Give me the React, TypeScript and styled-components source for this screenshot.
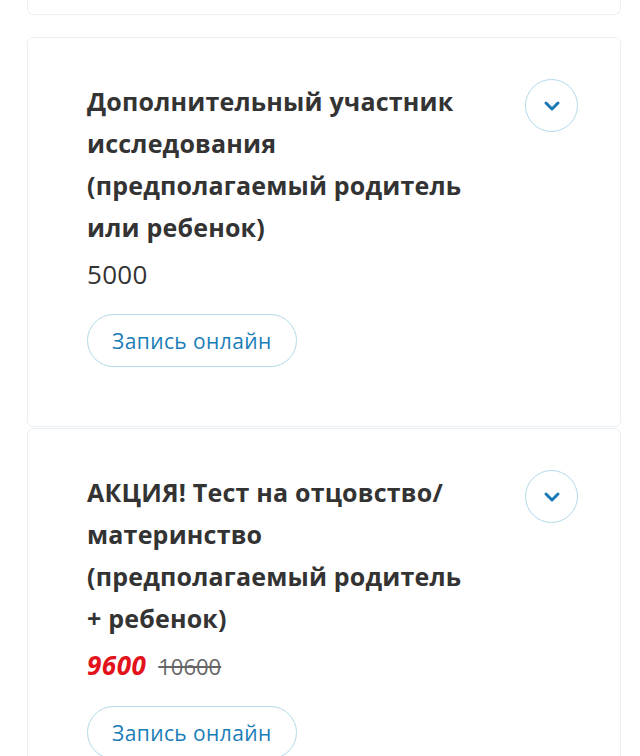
import styled, { createGlobalStyle } from "styled-components";

const GlobalStyle = createGlobalStyle`
  html, body {
    margin: 0;
    padding: 0;
    background: #ffffff;
  }
  body {
    font-family: "Open Sans", "Noto Sans", sans-serif;
    color: #333333;
  }
`;

type Service = {
  title: React.ReactNode;
  price: number;
  oldPrice?: number;
};

const services: Service[] = [
  {
    title: "Дополнительный участник исследования (предполагаемый родитель или ребенок)",
    price: 5000,
  },
  {
    title: (
      <>
        АКЦИЯ! Тест на отцовство/<wbr />материнство (предполагаемый родитель + ребенок)
      </>
    ),
    price: 9600,
    oldPrice: 10600,
  },
];

const ChevronDown = () => (
  <svg width="18" height="12" viewBox="0 0 18 12" fill="none">
    <path d="M3 3l6 6 6-6" stroke="#1a78b4" strokeWidth="3" strokeLinecap="round" strokeLinejoin="round" />
  </svg>
);

const App = () => {
  return (
    <>
      <GlobalStyle />
      <List>
        <PrevCard />
        {services.map((s, i) => (
          <Card key={i}>
            <Head>
              <Title>{s.title}</Title>
              <Toggle aria-label="Подробнее">
                <ChevronDown />
              </Toggle>
            </Head>
            <Prices>
              <Price $sale={!!s.oldPrice}>{s.price}</Price>
              {s.oldPrice && <OldPrice>{s.oldPrice}</OldPrice>}
            </Prices>
            <BookButton>Запись онлайн</BookButton>
          </Card>
        ))}
      </List>
    </>
  );
};

const List = styled.div`
  display: flex;
  flex-direction: column;
  gap: 1px;
  padding: 0 19px 0 27px;
`;

const PrevCard = styled.div`
  height: 14px;
  border: 1px solid #eef1f4;
  border-top: none;
  border-radius: 0 0 6px 6px;
  margin-bottom: 21px;
`;

const Card = styled.div`
  border: 1px solid #e9eef2;
  border-radius: 6px;
  padding: 42px 42px 59px 59px;
  background: #ffffff;
`;

const Head = styled.div`
  display: flex;
  align-items: flex-start;
  justify-content: space-between;
  gap: 24px;
`;

const Title = styled.h3`
  margin: 0;
  flex: 1;
  max-width: 386px;
  font-size: 25px;
  line-height: 42px;
  letter-spacing: 0.2px;
  font-weight: 700;
  color: #333333;
`;

const Toggle = styled.button`
  flex: none;
  width: 53px;
  height: 53px;
  margin-top: -1px;
  border-radius: 50%;
  border: 1px solid #b3d9ea;
  background: #ffffff;
  display: flex;
  align-items: center;
  justify-content: center;
  padding: 0;
  cursor: pointer;
`;

const Prices = styled.div`
  display: flex;
  align-items: baseline;
  gap: 12px;
  margin-top: 9px;
  line-height: 34px;
`;

const Price = styled.span<{ $sale: boolean }>`
  font-size: 26px;
  font-weight: ${(p) => (p.$sale ? 700 : 400)};
  font-style: ${(p) => (p.$sale ? "italic" : "normal")};
  letter-spacing: ${(p) => (p.$sale ? "0.5px" : "0.3px")};
  color: ${(p) => (p.$sale ? "#e3131b" : "#333333")};
`;

const OldPrice = styled.span`
  font-size: 22px;
  color: #666666;
  text-decoration: line-through;
`;

const BookButton = styled.button`
  margin-top: 23px;
  height: 53px;
  padding: 0 24px;
  border-radius: 27px;
  border: 1px solid #b3d9ea;
  background: #ffffff;
  font-family: "Open Sans", "Noto Sans", sans-serif;
  font-size: 21px;
  letter-spacing: 0.4px;
  color: #1a7db8;
  cursor: pointer;
`;

export default App;
